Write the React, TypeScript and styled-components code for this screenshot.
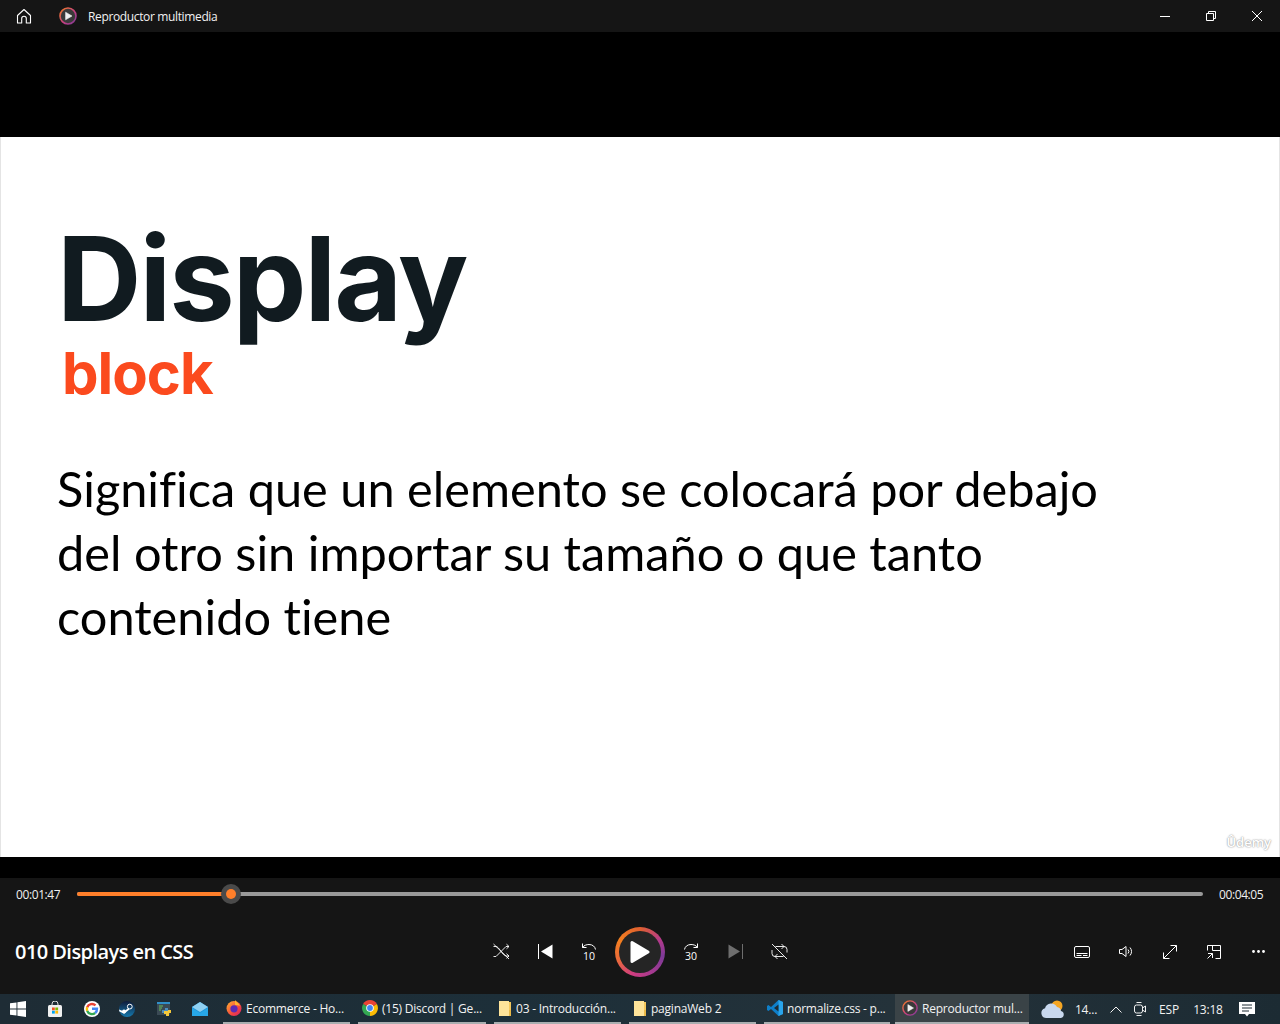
import React from 'react';
import styled, { createGlobalStyle } from 'styled-components';

const GlobalStyle = createGlobalStyle`
  html, body {
    margin: 0;
    padding: 0;
    background: #000;
  }
  * {
    box-sizing: border-box;
  }
`;

const uiFont = `'Open Sans', 'Noto Sans', sans-serif`;

const Page = styled.div`
  width: 1280px;
  height: 1024px;
  display: flex;
  flex-direction: column;
  overflow: hidden;
  font-family: ${uiFont};
  background: #000;
`;

const TitleBar = styled.div`
  height: 32px;
  flex: none;
  display: flex;
  align-items: center;
  background: #151515;
  color: #f2f2f2;
`;

const HomeButton = styled.div`
  width: 48px;
  display: flex;
  justify-content: center;
`;

const AppTitle = styled.div`
  display: flex;
  align-items: center;
  gap: 11px;
  margin-left: 11px;
  font-size: 12px;
  letter-spacing: -0.36px;
  flex: 1;
`;

const WindowButton = styled.div`
  width: 46px;
  height: 32px;
  display: flex;
  align-items: center;
  justify-content: center;
`;

const TopBlack = styled.div`
  height: 105px;
  flex: none;
  background: #000;
`;

const Slide = styled.div`
  position: relative;
  height: 720px;
  flex: none;
  background: #fff;
  padding: 77px 0 0 56px;
  border-left: 1px solid #e4e4e4;
  border-right: 1px solid #e4e4e4;
  font-variant-ligatures: none;
`;

const Heading = styled.div`
  font-family: Inter, sans-serif;
  font-weight: 700;
  font-size: 117px;
  line-height: 130px;
  letter-spacing: -2px;
  color: #111b20;
`;

const SubHeading = styled.div`
  font-family: Inter, sans-serif;
  font-weight: 700;
  font-size: 58px;
  line-height: 50px;
  letter-spacing: -1px;
  color: #fb4a1e;
  margin: 4px 0 0 5px;
`;

const Paragraph = styled.div`
  font-family: Lato, sans-serif;
  font-weight: 400;
  font-size: 48.7px;
  line-height: 64px;
  color: #000;
  margin-top: 58px;
  width: 1100px;
`;

const Watermark = styled.div`
  position: absolute;
  right: 8px;
  bottom: 6px;
  font-family: ${uiFont};
  font-size: 13px;
  font-weight: 600;
  color: #fff;
  text-shadow: 0 0 2px #999, 0 0 1px #aaa;
`;

const BottomBlack = styled.div`
  height: 21px;
  flex: none;
  background: #000;
`;

const Controls = styled.div`
  height: 116px;
  flex: none;
  background: #151515;
  color: #fff;
  display: flex;
  flex-direction: column;
`;

const ProgressRow = styled.div`
  height: 32px;
  display: flex;
  align-items: center;
  padding: 0 17px 0 16px;
`;

const TimeLabel = styled.div`
  width: 61px;
  font-size: 12px;
  letter-spacing: -0.4px;
  color: #f0f0f0;
  flex: none;
  &:last-child {
    width: 44px;
    margin-left: 16px;
  }
`;

const Track = styled.div`
  position: relative;
  flex: 1;
  height: 4px;
  border-radius: 2px;
  background: #999;
`;

const Filled = styled.div<{ $pct: number }>`
  height: 100%;
  width: ${(p) => p.$pct}%;
  border-radius: 2px;
  background: #ff7f2a;
`;

const Thumb = styled.div<{ $pct: number }>`
  position: absolute;
  left: ${(p) => p.$pct}%;
  top: 50%;
  width: 20px;
  height: 20px;
  margin: -10px 0 0 -10px;
  border-radius: 50%;
  background: #4a4a4a;
  display: flex;
  align-items: center;
  justify-content: center;
  &::after {
    content: '';
    width: 10px;
    height: 10px;
    border-radius: 50%;
    background: #ff7f2a;
  }
`;

const ButtonRow = styled.div`
  flex: 1;
  display: grid;
  grid-template-columns: 1fr auto 1fr;
  align-items: center;
  padding-bottom: 1px;
`;

const MediaTitle = styled.div`
  font-size: 20px;
  font-weight: 600;
  padding-left: 15px;
  letter-spacing: -0.56px;
  white-space: nowrap;
`;

const ButtonGroup = styled.div<{ $end?: boolean }>`
  display: flex;
  align-items: center;
  justify-content: ${(p) => (p.$end ? 'flex-end' : 'center')};
`;

const IconButton = styled.div`
  width: 44px;
  height: 44px;
  display: flex;
  align-items: center;
  justify-content: center;
`;

const PlayWrap = styled.div`
  width: 58px;
  display: flex;
  justify-content: center;
`;

const PlayRing = styled.div`
  width: 50px;
  height: 50px;
  border-radius: 50%;
  padding: 4px;
  background: conic-gradient(
    from 0deg,
    #e0602f 0deg,
    #b33a8c 60deg,
    #7d3a98 100deg,
    #a63a90 150deg,
    #cf3d80 200deg,
    #ea6a3a 250deg,
    #f47f20 300deg,
    #e0602f 360deg
  );
`;

const PlayInner = styled.div`
  width: 100%;
  height: 100%;
  border-radius: 50%;
  background: #252525;
  display: flex;
  align-items: center;
  justify-content: center;
`;

const Taskbar = styled.div`
  height: 30px;
  flex: none;
  display: flex;
  align-items: stretch;
  background: linear-gradient(90deg, #1e2c35 0%, #1d2f39 40%, #24323a 70%, #1c2b33 100%);
  color: #f2f2f2;
  font-size: 12px;
`;

const PinnedIcon = styled.div<{ $width: number }>`
  width: ${(p) => p.$width}px;
  flex: none;
  display: flex;
  align-items: center;
  justify-content: center;
`;

const TaskList = styled.div`
  display: flex;
  margin-left: 7px;
`;

const TaskItem = styled.div<{ $active?: boolean; $width: number; $pad: number; $gap?: number }>`
  width: ${(p) => p.$width}px;
  flex: none;
  display: flex;
  align-items: center;
  gap: 4px;
  padding-left: ${(p) => p.$pad}px;
  white-space: nowrap;
  letter-spacing: -0.22px;
  background: ${(p) => (p.$active ? '#3a4347' : 'transparent')};
  border-bottom: 2px solid #a9aeb0;
  margin-right: ${(p) => p.$gap ?? 8}px;
`;

const Tray = styled.div`
  flex: 1;
  display: flex;
  align-items: center;
  padding-left: 3px;
`;

const TrayText = styled.div<{ $width: number }>`
  width: ${(p) => p.$width}px;
  flex: none;
  text-align: center;
  white-space: nowrap;
  letter-spacing: -0.2px;
`;

const TrayIcon = styled.div<{ $width: number }>`
  width: ${(p) => p.$width}px;
  flex: none;
  display: flex;
  align-items: center;
  justify-content: center;
`;

const MediaLogo = ({ size = 18 }: { size?: number }) => (
  <svg width={size} height={size} viewBox="0 0 18 18">
    <defs>
      <linearGradient id="mediaRing" x1="0" y1="0" x2="1" y2="1">
        <stop offset="0" stopColor="#f47f20" />
        <stop offset="0.55" stopColor="#c83f84" />
        <stop offset="1" stopColor="#7d3a98" />
      </linearGradient>
    </defs>
    <circle cx="9" cy="9" r="8" fill="#3a3a3a" stroke="url(#mediaRing)" strokeWidth="1.6" />
    <path d="M6.6 5.2v7.6L13 9z" fill="#f0f0f0" stroke="#f0f0f0" strokeWidth="0.6" strokeLinejoin="round" />
  </svg>
);

const Stroke = ({
  size = 16,
  w = 16,
  h = 16,
  width = 1,
  color = '#fff',
  children,
}: {
  size?: number;
  w?: number;
  h?: number;
  width?: number;
  color?: string;
  children: React.ReactNode;
}) => (
  <svg width={size} height={(size * h) / w} viewBox={`0 0 ${w} ${h}`} fill="none" stroke={color} strokeWidth={width}>
    {children}
  </svg>
);

const SeekIcon = ({ label, flip }: { label: string; flip?: boolean }) => (
  <svg width="18" height="18" viewBox="0 0 18 18" fill="none" stroke="#fff">
    <g transform={flip ? 'matrix(-1 0 0 1 18 0)' : undefined}>
      <path d="M2.500 4.500C4 2.300 6.500 1.500 9 1.500c3.500 0 6 2 6.500 5M2.500.5v4h4" strokeWidth="1" />
    </g>
    <text x="9" y="16.500" fontSize="10.500" textAnchor="middle" fill="#fff" stroke="none" fontFamily={uiFont}>
      {label}
    </text>
  </svg>
);

const Folder = () => (
  <svg width="14" height="17" viewBox="0 0 14 17">
    <path d="M1 1h10v15H1z" fill="#fee49a" />
    <path d="M11 2h2v14h-2z" fill="#f5c85c" />
    <path d="M11 10h2v6h-2z" fill="#e9b949" />
  </svg>
);

export default function App() {
  const progress = ((231 - 77) / (1203 - 77)) * 100;

  return (
    <Page>
      <GlobalStyle />
      <TitleBar>
        <HomeButton>
          <Stroke size={16} width={1.1}>
            <path d="M1.500 7.500 8 1.500l6.500 6V15h-4.200v-4.500a2.300 2.300 0 0 0-4.600 0V15H1.500z" strokeLinejoin="round" />
          </Stroke>
        </HomeButton>
        <AppTitle>
          <MediaLogo />
          Reproductor multimedia
        </AppTitle>
        <WindowButton>
          <Stroke size={10} w={10} h={10}>
            <path d="M0 5.500h10" />
          </Stroke>
        </WindowButton>
        <WindowButton>
          <Stroke size={10} w={10} h={10}>
            <path d="M.5 2.500h7v7h-7z" />
            <path d="M2.500 2.500v-2h7v7h-2" />
          </Stroke>
        </WindowButton>
        <WindowButton>
          <Stroke size={10} w={10} h={10}>
            <path d="M0 0l10 10M10 0 0 10" />
          </Stroke>
        </WindowButton>
      </TitleBar>

      <TopBlack />

      <Slide>
        <Heading>Display</Heading>
        <SubHeading>block</SubHeading>
        <Paragraph>
          Significa que un elemento se colocará por debajo del otro sin importar su tamaño o que tanto contenido tiene
        </Paragraph>
        <Watermark>Ûdemy</Watermark>
      </Slide>

      <BottomBlack />

      <Controls>
        <ProgressRow>
          <TimeLabel>00:01:47</TimeLabel>
          <Track>
            <Filled $pct={progress} />
            <Thumb $pct={progress} />
          </Track>
          <TimeLabel>00:04:05</TimeLabel>
        </ProgressRow>
        <ButtonRow>
          <MediaTitle>010 Displays en CSS</MediaTitle>
          <ButtonGroup>
            <IconButton>
              <Stroke size={17} w={17} h={17} width={0.9}>
                <path d="M.5 1 16 16M.5 13.500h2.500L13 3.500h3M.5 3.500H3c3 0 6 8.500 10 9.500h3" />
                <path d="M13.500 1.200 16 3.500l-2.500 2.300M13.500 10.700 16 13l-2.500 2.300" />
              </Stroke>
            </IconButton>
            <IconButton>
              <svg width="15" height="15" viewBox="0 0 15 15">
                <path d="M.5 0v15" stroke="#fff" strokeWidth="1" />
                <path d="M14.500 .5v14L3 7.500z" fill="#fff" />
              </svg>
            </IconButton>
            <IconButton>
              <SeekIcon label="10" />
            </IconButton>
            <PlayWrap>
              <PlayRing>
                <PlayInner>
                  <svg width="20" height="24" viewBox="0 0 20 24">
                    <path d="M2 2.500v19L18 12z" fill="#fff" stroke="#fff" strokeWidth="3" strokeLinejoin="round" />
                  </svg>
                </PlayInner>
              </PlayRing>
            </PlayWrap>
            <IconButton>
              <SeekIcon label="30" flip />
            </IconButton>
            <IconButton>
              <svg width="15" height="15" viewBox="0 0 15 15">
                <path d="M14.500 0v15" stroke="#6e6e6e" strokeWidth="1" />
                <path d="M.5 .5v14L12 7.500z" fill="#6e6e6e" />
              </svg>
            </IconButton>
            <IconButton>
              <Stroke size={17} w={17} h={17} width={0.9}>
                <path d="M1 1l15 15" />
                <path d="M4.500 3.500h8.500a3 3 0 0 1 3 3v3M12.500 13.500H4a3 3 0 0 1-3-3V7" />
                <path d="M10.500 1l2.500 2.500L10.500 6M6.500 11 4 13.500 6.500 16" />
              </Stroke>
            </IconButton>
          </ButtonGroup>
          <ButtonGroup $end>
            <IconButton>
              <Stroke size={16} w={16} h={12}>
                <rect x=".5" y=".5" width="15" height="11" rx="1.500" />
                <path d="M2.500 7.500h11M2.500 9.500h5M9 9.500h4.500" />
              </Stroke>
            </IconButton>
            <IconButton>
              <Stroke size={14} w={14} h={13}>
                <path d="M.5 4.500h2.500L7 1.500v10l-4-3H.5z" strokeLinejoin="round" />
                <path d="M9 4.500a3 3 0 0 1 0 4M11 2.500a6 6 0 0 1 0 8" />
              </Stroke>
            </IconButton>
            <IconButton>
              <Stroke size={14} w={14} h={14}>
                <path d="M.5 13.500 13.500.5M7.500.5h6v6M.5 7.500v6h6" />
              </Stroke>
            </IconButton>
            <IconButton>
              <Stroke size={14} w={14} h={14}>
                <path d="M.5 5.500v-5h13v13h-5M5.500.5v5h8M.5 13.500 5.500 8.500M1 8.500h4.500V13" />
              </Stroke>
            </IconButton>
            <IconButton>
              <svg width="13" height="3" viewBox="0 0 13 3">
                <circle cx="1.500" cy="1.500" r="1.400" fill="#fff" />
                <circle cx="6.500" cy="1.500" r="1.400" fill="#fff" />
                <circle cx="11.500" cy="1.500" r="1.400" fill="#fff" />
              </svg>
            </IconButton>
          </ButtonGroup>
        </ButtonRow>
      </Controls>

      <Taskbar>
        <PinnedIcon $width={36}>
          <svg width="16" height="16" viewBox="0 0 16 16">
            <path d="M0 2.300 6.500 1.400v6.100H0zM7.400 1.300 16 0v7.500H7.400zM0 8.400h6.500v6.200L0 13.700zM7.400 8.400H16V16l-8.600-1.300z" fill="#fff" />
          </svg>
        </PinnedIcon>
        <PinnedIcon $width={38}>
          <svg width="16" height="16" viewBox="0 0 16 16">
            <path d="M5 4V3a3 3 0 0 1 6 0v1" fill="none" stroke="#ddd" />
            <rect x="1" y="4" width="14" height="12" rx="1.500" fill="#f0f0f0" />
            <rect x="5" y="6.500" width="2.800" height="2.800" fill="#f25022" />
            <rect x="8.300" y="6.500" width="2.800" height="2.800" fill="#7fba00" />
            <rect x="5" y="9.800" width="2.800" height="2.800" fill="#00a4ef" />
            <rect x="8.300" y="9.800" width="2.800" height="2.800" fill="#ffb900" />
          </svg>
        </PinnedIcon>
        <PinnedIcon $width={36}>
          <svg width="16" height="16" viewBox="0 0 16 16">
            <circle cx="8" cy="8" r="8" fill="#fff" />
            <g fill="none" strokeWidth="2.400">
              <path d="M3.200 6.200A5.100 5.100 0 0 1 11.500 4.400" stroke="#ea4335" />
              <path d="M3.200 6.200a5.100 5.100 0 0 0 0 3.600" stroke="#fbbc05" />
              <path d="M3.200 9.800a5.100 5.100 0 0 0 8 2.200" stroke="#34a853" />
              <path d="M11.200 12A5.100 5.100 0 0 0 13 7.800H8" stroke="#4285f4" />
            </g>
          </svg>
        </PinnedIcon>
        <PinnedIcon $width={34}>
          <svg width="16" height="16" viewBox="0 0 16 16">
            <defs>
              <linearGradient id="steamBg" x1="0" y1="0" x2="0" y2="1">
                <stop offset="0" stopColor="#0f1b3a" />
                <stop offset="1" stopColor="#1579ad" />
              </linearGradient>
            </defs>
            <circle cx="8" cy="8" r="8" fill="url(#steamBg)" />
            <circle cx="10.800" cy="5.600" r="2.400" fill="none" stroke="#fff" />
            <circle cx="5" cy="10.600" r="2" fill="#fff" />
            <path d="M0 8.400l5 2.200 4-3.400 1.400 1.200-5.200 4.400L.4 10.600z" fill="#fff" />
          </svg>
        </PinnedIcon>
        <PinnedIcon $width={40}>
          <svg width="16" height="16" viewBox="0 0 16 16">
            <rect x="1" y="1" width="13" height="13" fill="#3a4a55" />
            <rect x="1" y="1" width="13" height="2" fill="#2f8fc9" />
            <path d="M3 5h4M3 7h3M3 9h2" stroke="#6fbf5a" />
            <path d="M9 7h3v2h3v3h-2v3h-3v-2H8v-3h1z" fill="#f5c93a" />
            <path d="M9 7h3v3H8v2H6V9h3z" fill="#4d8fbf" />
          </svg>
        </PinnedIcon>
        <PinnedIcon $width={32}>
          <svg width="16" height="14" viewBox="0 0 16 14">
            <path d="M0 5 8 0l8 5v9H0z" fill="#1f95d8" />
            <path d="M0 5l8 5 8-5-8-5z" fill="#8fd0f2" />
            <path d="M0 14V6l8 5 8-5v8z" fill="#27a7e8" />
          </svg>
        </PinnedIcon>

        <TaskList>
          <TaskItem $width={127} $pad={3}>
            <svg width="16" height="16" viewBox="0 0 16 16">
              <defs>
                <linearGradient id="fox" x1="0" y1="0" x2="1" y2="1">
                  <stop offset="0" stopColor="#ffb52e" />
                  <stop offset="0.6" stopColor="#f5473f" />
                  <stop offset="1" stopColor="#d01a6e" />
                </linearGradient>
              </defs>
              <circle cx="8" cy="8.500" r="7.500" fill="url(#fox)" />
              <circle cx="8" cy="8.800" r="3.600" fill="#5b2bb5" />
              <path d="M9 0c1 2 4 3 5 6-2-1-3-1-5-1z" fill="#ffb52e" />
            </svg>
            Ecommerce - Ho...
          </TaskItem>
          <TaskItem $width={128} $pad={4}>
            <svg width="16" height="16" viewBox="0 0 16 16">
              <path d="M8 8 1.100 4A8 8 0 0 1 14.900 4z" fill="#ea4335" />
              <path d="M8 8 14.900 4A8 8 0 0 1 8 16z" fill="#fbbc05" />
              <path d="M8 8 8 16A8 8 0 0 1 1.100 4z" fill="#34a853" />
              <circle cx="8" cy="8" r="3.800" fill="#fff" />
              <circle cx="8" cy="8" r="2.900" fill="#4285f4" />
            </svg>
            (15) Discord | Ge...
          </TaskItem>
          <TaskItem $width={127} $pad={4}>
            <Folder />
            03 - Introducción...
          </TaskItem>
          <TaskItem $width={127} $pad={4}>
            <Folder />
            paginaWeb 2
          </TaskItem>
          <TaskItem $width={126} $pad={3} $gap={5}>
            <svg width="16" height="16" viewBox="0 0 16 16">
              <path d="M11.500 0 16 2v12l-4.500 2L4 9l-2.600 2L0 10V6l1.400-1L4 7z" fill="#0e7fc9" />
              <path d="M11.500 0 16 2v12l-4.500 2z" fill="#2aa5ec" />
              <path d="M11.500 4.600 7 8l4.500 3.400z" fill="#1c2c34" />
            </svg>
            normalize.css - p...
          </TaskItem>
          <TaskItem $active $width={134} $pad={7} $gap={0}>
            <MediaLogo size={16} />
            Reproductor mul...
          </TaskItem>
        </TaskList>

        <Tray>
          <TrayIcon $width={42}>
            <svg width="26" height="20" viewBox="0 0 26 20">
              <circle cx="17" cy="7" r="5.500" fill="#f5a623" />
              <path d="M6 19a5 5 0 0 1-1-9.800A6.500 6.500 0 0 1 17 8a4.800 4.800 0 0 1 4 4 3.600 3.600 0 0 1 0 7z" fill="#c8d8ee" />
            </svg>
          </TrayIcon>
          <TrayText $width={24}>14...</TrayText>
          <TrayIcon $width={36}>
            <Stroke size={12} w={12} h={7} color="#f2f2f2">
              <path d="M.5 6.500 6 1l5.500 5.500" />
            </Stroke>
          </TrayIcon>
          <TrayIcon $width={12}>
            <Stroke size={12} w={12} h={16} color="#f2f2f2">
              <rect x=".5" y="4" width="8" height="8" rx="2" />
              <path d="M8.500 7l3-2v6l-3-2M2.500 1.500h5M2.500 14.500h5" />
            </Stroke>
          </TrayIcon>
          <TrayText $width={46}>ESP</TrayText>
          <TrayText $width={32}>13:18</TrayText>
          <TrayIcon $width={46}>
            <svg width="16" height="16" viewBox="0 0 16 16">
              <path d="M0 1h16v12H10l-2 2.500L6 13H0z" fill="#fff" />
              <path d="M3 4h10M3 7h10M3 10h7" stroke="#1c2b33" />
            </svg>
          </TrayIcon>
        </Tray>
      </Taskbar>
    </Page>
  );
}
